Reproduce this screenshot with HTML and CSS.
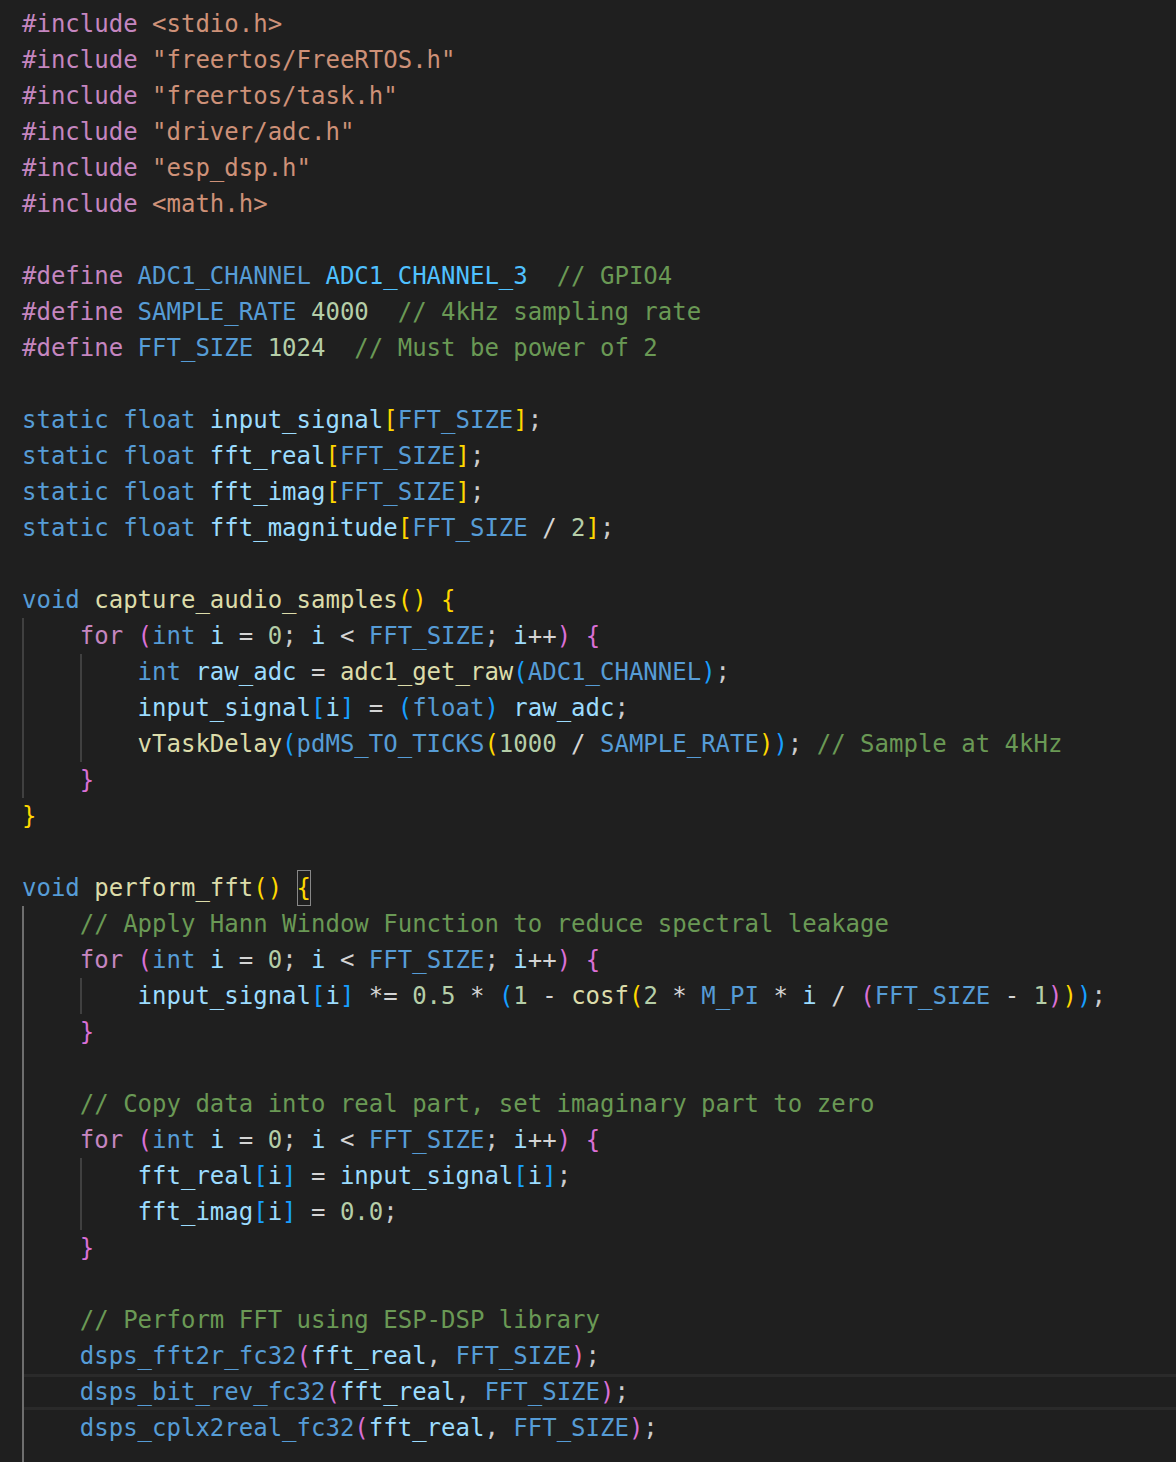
FILE: index.html
```html
<!DOCTYPE html>
<html lang="en">
<head>
<meta charset="utf-8">
<title>main.c</title>
<link rel="stylesheet" href="styles.css">
</head>
<body>
<div class="editor">
<div class="ln"><span class="p">#include</span> <span class="s">&lt;stdio.h&gt;</span></div>
<div class="ln"><span class="p">#include</span> <span class="s">"freertos/FreeRTOS.h"</span></div>
<div class="ln"><span class="p">#include</span> <span class="s">"freertos/task.h"</span></div>
<div class="ln"><span class="p">#include</span> <span class="s">"driver/adc.h"</span></div>
<div class="ln"><span class="p">#include</span> <span class="s">"esp_dsp.h"</span></div>
<div class="ln"><span class="p">#include</span> <span class="s">&lt;math.h&gt;</span></div>
<div class="ln"></div>
<div class="ln"><span class="p">#define</span> <span class="m">ADC1_CHANNEL</span> <span class="e">ADC1_CHANNEL_3</span>  <span class="c">// GPIO4</span></div>
<div class="ln"><span class="p">#define</span> <span class="m">SAMPLE_RATE</span> <span class="n">4000</span>  <span class="c">// 4kHz sampling rate</span></div>
<div class="ln"><span class="p">#define</span> <span class="m">FFT_SIZE</span> <span class="n">1024</span>  <span class="c">// Must be power of 2</span></div>
<div class="ln"></div>
<div class="ln"><span class="k">static</span> <span class="k">float</span> <span class="v">input_signal</span><span class="b1">[</span><span class="m">FFT_SIZE</span><span class="b1">]</span>;</div>
<div class="ln"><span class="k">static</span> <span class="k">float</span> <span class="v">fft_real</span><span class="b1">[</span><span class="m">FFT_SIZE</span><span class="b1">]</span>;</div>
<div class="ln"><span class="k">static</span> <span class="k">float</span> <span class="v">fft_imag</span><span class="b1">[</span><span class="m">FFT_SIZE</span><span class="b1">]</span>;</div>
<div class="ln"><span class="k">static</span> <span class="k">float</span> <span class="v">fft_magnitude</span><span class="b1">[</span><span class="m">FFT_SIZE</span> <span class="o">/</span> <span class="n">2</span><span class="b1">]</span>;</div>
<div class="ln"></div>
<div class="ln"><span class="k">void</span> <span class="f">capture_audio_samples</span><span class="b1">()</span> <span class="b1">{</span></div>
<div class="ln"><span class="ind">    </span><span class="p">for</span> <span class="b2">(</span><span class="k">int</span> <span class="v">i</span> <span class="o">=</span> <span class="n">0</span>; <span class="v">i</span> <span class="o">&lt;</span> <span class="m">FFT_SIZE</span>; <span class="v">i</span><span class="o">++</span><span class="b2">)</span> <span class="b2">{</span></div>
<div class="ln"><span class="ind">    </span><span class="ind">    </span><span class="k">int</span> <span class="v">raw_adc</span> <span class="o">=</span> <span class="f">adc1_get_raw</span><span class="b3">(</span><span class="m">ADC1_CHANNEL</span><span class="b3">)</span>;</div>
<div class="ln"><span class="ind">    </span><span class="ind">    </span><span class="v">input_signal</span><span class="b3">[</span><span class="v">i</span><span class="b3">]</span> <span class="o">=</span> <span class="b3">(</span><span class="k">float</span><span class="b3">)</span> <span class="v">raw_adc</span>;</div>
<div class="ln"><span class="ind">    </span><span class="ind">    </span><span class="f">vTaskDelay</span><span class="b3">(</span><span class="m">pdMS_TO_TICKS</span><span class="b1">(</span><span class="n">1000</span> <span class="o">/</span> <span class="m">SAMPLE_RATE</span><span class="b1">)</span><span class="b3">)</span>; <span class="c">// Sample at 4kHz</span></div>
<div class="ln"><span class="ind">    </span><span class="b2">}</span></div>
<div class="ln"><span class="b1">}</span></div>
<div class="ln"></div>
<div class="ln"><span class="k">void</span> <span class="f">perform_fft</span><span class="b1">()</span> <span class="b1 match">{</span></div>
<div class="ln"><span class="ind a">    </span><span class="c">// Apply Hann Window Function to reduce spectral leakage</span></div>
<div class="ln"><span class="ind a">    </span><span class="p">for</span> <span class="b2">(</span><span class="k">int</span> <span class="v">i</span> <span class="o">=</span> <span class="n">0</span>; <span class="v">i</span> <span class="o">&lt;</span> <span class="m">FFT_SIZE</span>; <span class="v">i</span><span class="o">++</span><span class="b2">)</span> <span class="b2">{</span></div>
<div class="ln"><span class="ind a">    </span><span class="ind">    </span><span class="v">input_signal</span><span class="b3">[</span><span class="v">i</span><span class="b3">]</span> <span class="o">*=</span> <span class="n">0.5</span> <span class="o">*</span> <span class="b3">(</span><span class="n">1</span> <span class="o">-</span> <span class="f">cosf</span><span class="b1">(</span><span class="n">2</span> <span class="o">*</span> <span class="m">M_PI</span> <span class="o">*</span> <span class="v">i</span> <span class="o">/</span> <span class="b2">(</span><span class="m">FFT_SIZE</span> <span class="o">-</span> <span class="n">1</span><span class="b2">)</span><span class="b1">)</span><span class="b3">)</span>;</div>
<div class="ln"><span class="ind a">    </span><span class="b2">}</span></div>
<div class="ln"><span class="ind a">    </span></div>
<div class="ln"><span class="ind a">    </span><span class="c">// Copy data into real part, set imaginary part to zero</span></div>
<div class="ln"><span class="ind a">    </span><span class="p">for</span> <span class="b2">(</span><span class="k">int</span> <span class="v">i</span> <span class="o">=</span> <span class="n">0</span>; <span class="v">i</span> <span class="o">&lt;</span> <span class="m">FFT_SIZE</span>; <span class="v">i</span><span class="o">++</span><span class="b2">)</span> <span class="b2">{</span></div>
<div class="ln"><span class="ind a">    </span><span class="ind">    </span><span class="v">fft_real</span><span class="b3">[</span><span class="v">i</span><span class="b3">]</span> <span class="o">=</span> <span class="v">input_signal</span><span class="b3">[</span><span class="v">i</span><span class="b3">]</span>;</div>
<div class="ln"><span class="ind a">    </span><span class="ind">    </span><span class="v">fft_imag</span><span class="b3">[</span><span class="v">i</span><span class="b3">]</span> <span class="o">=</span> <span class="n">0.0</span>;</div>
<div class="ln"><span class="ind a">    </span><span class="b2">}</span></div>
<div class="ln"><span class="ind a">    </span></div>
<div class="ln"><span class="ind a">    </span><span class="c">// Perform FFT using ESP-DSP library</span></div>
<div class="ln"><span class="ind a">    </span><span class="m">dsps_fft2r_fc32</span><span class="b2">(</span><span class="v">fft_real</span>, <span class="m">FFT_SIZE</span><span class="b2">)</span>;</div>
<div class="ln cur"><span class="ind a">    </span><span class="m">dsps_bit_rev_fc32</span><span class="b2">(</span><span class="v">fft_real</span>, <span class="m">FFT_SIZE</span><span class="b2">)</span>;</div>
<div class="ln"><span class="ind a">    </span><span class="m">dsps_cplx2real_fc32</span><span class="b2">(</span><span class="v">fft_real</span>, <span class="m">FFT_SIZE</span><span class="b2">)</span>;</div>
<div class="ln"><span class="ind a">    </span></div>
</div>
</body>
</html>
```

FILE: styles.css
```css
html, body {
  margin: 0;
  padding: 0;
  background: #1f1f1f;
  height: 100%;
  overflow: hidden;
}

.editor {
  padding: 6px 0 0 22px;
  font-family: "DejaVu Sans Mono", "Liberation Mono", monospace;
  font-size: 24px;
  color: #cccccc;
}

.ln {
  height: 36px;
  line-height: 36px;
  white-space: pre;
}

.cur {
  box-shadow: inset 0 3px 0 #2a2a2a, inset 0 -3px 0 #2a2a2a;
}

.ind {
  display: inline-block;
  height: 36px;
  vertical-align: top;
  background: linear-gradient(to right, #404040 0, #404040 2px, transparent 2px);
}

.ind.a {
  background: linear-gradient(to right, #6e6e6e 0, #6e6e6e 2px, transparent 2px);
}

.match {
  display: inline-block;
  height: 36px;
  vertical-align: top;
  outline: 1px solid #888888;
  outline-offset: -1px;
}

.p { color: #c586c0; }
.s { color: #ce9178; }
.m { color: #569cd6; }
.k { color: #569cd6; }
.e { color: #4fc1ff; }
.c { color: #6a9955; }
.n { color: #b5cea8; }
.v { color: #9cdcfe; }
.f { color: #dcdcaa; }
.o { color: #d4d4d4; }
.b1 { color: #ffd700; }
.b2 { color: #da70d6; }
.b3 { color: #179fff; }
```
